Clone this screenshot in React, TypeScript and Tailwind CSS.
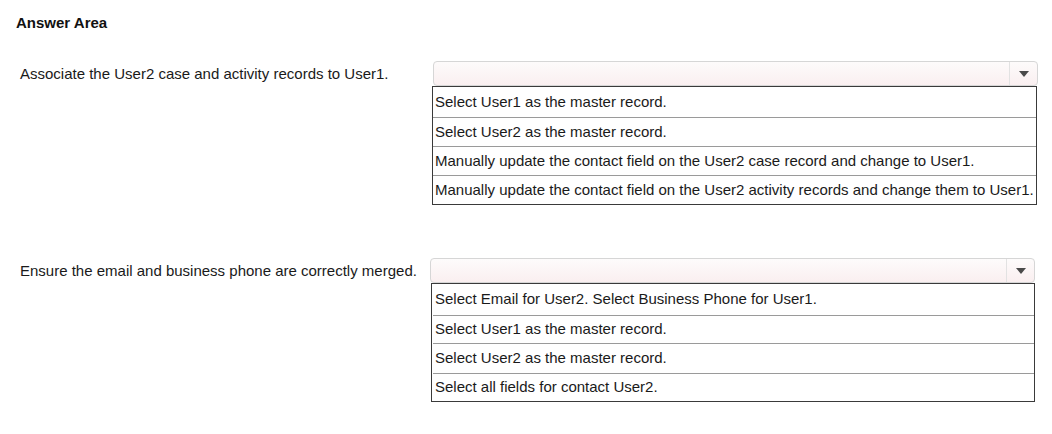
import React from "react";

type Section = {
  label: string;
  labelW: string;
  ddW: string;
  listCls: string;
  rows: { text: string; h: string }[];
  top: string;
};

function Dropdown({ w }: { w: string }) {
  return (
    <div
      className={`${w} h-[25px] flex rounded-[4px] border border-[#d6d6d6] bg-gradient-to-b from-[#fdfbfb] to-[#faeff0]`}
    >
      <div className="flex-1" />
      <div className="w-[28px] border-l border-[#e2e2e2] flex items-center justify-center">
        <svg width="10" height="6" viewBox="0 0 10 6">
          <path d="M0 0 L10 0 L5 6 Z" fill="#4a4a4a" />
        </svg>
      </div>
    </div>
  );
}

function Block({ s }: { s: Section }) {
  return (
    <div className={`flex items-start pl-5 ${s.top}`}>
      <div className={`${s.labelW} leading-[25px] text-[15px] text-[#1a1a1a]`}>{s.label}</div>
      <div className="flex flex-col">
        <Dropdown w={s.ddW} />
        <div className={`${s.listCls} border border-[#3a3a3a] flex flex-col`}>
          {s.rows.map((r, i) => (
            <div
              key={i}
              className={`${r.h} flex items-center pl-[2px] text-[15px] text-[#1a1a1a] whitespace-nowrap ${
                i > 0 ? "border-t border-[#9a9a9a]" : ""
              }`}
            >
              {r.text}
            </div>
          ))}
        </div>
      </div>
    </div>
  );
}

export default function App() {
  const s1: Section = {
    label: "Associate the User2 case and activity records to User1.",
    labelW: "w-[413px]",
    ddW: "w-[605px]",
    listCls: "w-[605px] -ml-[1px]",
    top: "mt-[30px]",
    rows: [
      { text: "Select User1 as the master record.", h: "h-[30px]" },
      { text: "Select User2 as the master record.", h: "h-[29px]" },
      { text: "Manually update the contact field on the User2 case record and change to User1.", h: "h-[29px]" },
      { text: "Manually update the contact field on the User2 activity records and change them to User1.", h: "h-[29px]" },
    ],
  };
  const s2: Section = {
    label: "Ensure the email and business phone are correctly merged.",
    labelW: "w-[410px]",
    ddW: "w-[605px]",
    listCls: "w-[604px] ml-[1px] pl-[1px]",
    top: "mt-[53px]",
    rows: [
      { text: "Select Email for User2. Select Business Phone for User1.", h: "h-[31px]" },
      { text: "Select User1 as the master record.", h: "h-[28px]" },
      { text: "Select User2 as the master record.", h: "h-[30px]" },
      { text: "Select all fields for contact User2.", h: "h-[28px]" },
    ],
  };
  return (
    <div
      className="w-[1052px] h-[434px] bg-white overflow-hidden"
      style={{ fontFamily: '"Liberation Sans", Arial, sans-serif' }}
    >
      <div className="pt-[14px] pl-4 text-[15px] leading-[17px] font-bold text-[#111]">Answer Area</div>
      <Block s={s1} />
      <Block s={s2} />
    </div>
  );
}
